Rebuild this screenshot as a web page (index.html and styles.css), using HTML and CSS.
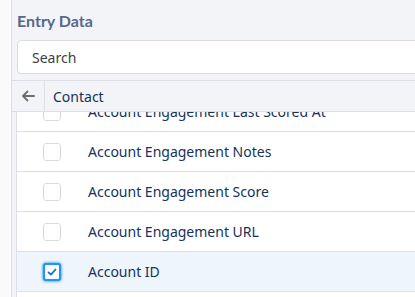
FILE: index.html
```html
<!DOCTYPE html>
<html>
<head>
    <title>Entry Data</title>
    <link rel="stylesheet" href="styles.css">
</head>
<body>
    <div class="layout">
        <div class="side-strip"></div>
        <div class="panel">
            <h2 class="panel-title">Entry Data</h2>
            <div class="search-box">
                <input type="text" class="search-input" placeholder="Search">
            </div>
            <div class="nav-row">
                <button class="back-btn" aria-label="Back">
                    <svg width="14" height="12" viewBox="0 0 14 12">
                        <path d="M13 6H2M6.5 1.5L2 6l4.5 4.5" fill="none" stroke="#706e6b" stroke-width="1.8" stroke-linecap="round" stroke-linejoin="round"/>
                    </svg>
                </button>
                <span class="nav-label">Contact</span>
            </div>
            <div class="field-list">
                <ul class="fields">
                    <li class="field"><span class="check"></span><span class="field-name">Account Engagement Last Scored At</span></li>
                    <li class="field"><span class="check"></span><span class="field-name">Account Engagement Notes</span></li>
                    <li class="field"><span class="check"></span><span class="field-name">Account Engagement Score</span></li>
                    <li class="field"><span class="check"></span><span class="field-name">Account Engagement URL</span></li>
                    <li class="field selected">
                        <span class="check checked">
                            <svg width="10" height="8" viewBox="0 0 10 8">
                                <path d="M1.5 4.4l2.4 2.2L8.5 1.5" fill="none" stroke="#0176d3" stroke-width="1.8" stroke-linecap="round" stroke-linejoin="round"/>
                            </svg>
                        </span>
                        <span class="field-name">Account ID</span>
                    </li>
                    <li class="field"><span class="check"></span><span class="field-name">Account Name</span></li>
                </ul>
            </div>
        </div>
    </div>
</body>
</html>
```

FILE: styles.css
```css
* {
    margin: 0;
    padding: 0;
    box-sizing: border-box;
    font-family: 'Noto Sans', 'Open Sans', sans-serif;
}

body {
    background: #fafafa;
    height: 297px;
    overflow: hidden;
}

.layout {
    display: flex;
    height: 100%;
}

.side-strip {
    width: 12px;
    flex-shrink: 0;
    background: #fafafa;
    border-right: 1px solid #dddfe6;
}

.panel {
    flex: 1;
    background: #f3f4f8;
    padding-top: 11px;
    display: flex;
    flex-direction: column;
    min-width: 0;
}

.panel-title {
    font-family: 'Lato', 'Noto Sans', sans-serif;
    color: #54698d;
    font-size: 16px;
    font-weight: 700;
    line-height: 20px;
    padding-left: 5px;
    margin-bottom: 9px;
}

.search-box {
    padding-left: 5px;
    margin-right: -10px;
}

.search-input {
    width: 100%;
    height: 34px;
    border: 1px solid #dddbda;
    border-radius: 4px;
    background: white;
    padding: 0 14px;
    font-size: 14px;
    color: #3e3e3c;
    outline: none;
}

.search-input::placeholder {
    color: #3e3e3c;
}

.nav-row {
    margin-top: 6px;
    height: 32px;
    display: flex;
    align-items: center;
    border-top: 1px solid #dddfe6;
    border-bottom: 1px solid #dddfe6;
}

.back-btn {
    width: 33px;
    height: 100%;
    border: none;
    border-right: 1px solid #dddfe6;
    background: transparent;
    display: flex;
    align-items: center;
    justify-content: center;
}

.nav-label {
    padding-left: 8px;
    font-size: 14px;
    color: #16325c;
}

.field-list {
    flex: 1;
    overflow: hidden;
    margin-left: 4px;
    background: white;
    border-left: 1px solid #dddfe6;
}

.fields {
    list-style: none;
    margin-top: -20px;
}

.field {
    height: 40px;
    display: flex;
    align-items: center;
    border-bottom: 1px solid #dddfe6;
    padding-left: 26px;
}

.field.selected {
    background: #eef5fb;
}

.check {
    width: 18px;
    height: 18px;
    border: 1px solid #dddbda;
    border-radius: 3px;
    background: white;
    display: flex;
    align-items: center;
    justify-content: center;
    flex-shrink: 0;
}

.check.checked {
    border: 2px solid #1b96ff;
    box-shadow: 0 0 3px #0176d3;
}

.field-name {
    margin-left: 27px;
    font-size: 14px;
    color: #16325c;
    white-space: nowrap;
}
```
